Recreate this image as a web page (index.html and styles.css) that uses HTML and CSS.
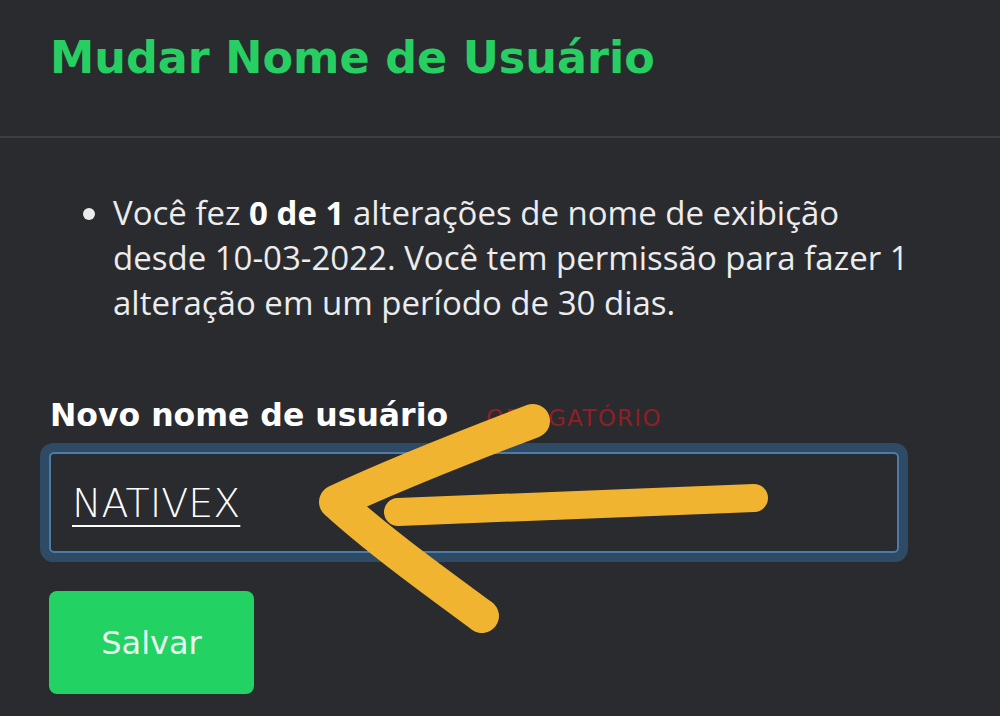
FILE: index.html
```html
<!DOCTYPE html>
<html lang="pt">

<head>
    <meta charset="UTF-8">
    <meta name="viewport" content="width=device-width, initial-scale=1.0">
    <title>Mudar Nome de Usuário</title>
    <link rel="stylesheet" href="styles.css">
</head>

<body>
    <!-- Header Section -->
    <header class="page-head">
        <h1>Mudar Nome de Usuário</h1>
    </header>

    <main class="content">
        <ul class="notes">
            <li>Você fez <strong>0 de 1</strong> alterações de nome de exibição desde <span class="date">10-03-2022.</span> Você tem permissão para fazer 1 alteração em um período de 30 dias.</li>
        </ul>

        <form class="name-form">
            <label class="field-label" for="newName">Novo nome de usuário <span class="required">OBRIGATÓRIO</span></label>
            <div class="field" id="newName"><span class="field-value">NATIVEX</span></div>
            <button type="submit" class="save-button">Salvar</button>
        </form>

        <!-- hand drawn arrow on top of the screenshot -->
        <svg class="arrow" width="1000" height="716" viewBox="0 0 1000 716">
            <g fill="none" stroke="#f1b431" stroke-linecap="round" stroke-linejoin="round">
                <path d="M533 421 C470 445 400 472 336 502 C380 542 440 585 482 616" stroke-width="34" />
                <path d="M398 512 C520 508 640 503 754 498" stroke-width="28" />
            </g>
        </svg>
    </main>
</body>

</html>
```

FILE: styles.css
```css
body {
    font-family: "Open Sans", Arial, sans-serif;
    background-color: #2a2b2f;
    margin: 0;
    padding: 0;
    color: #e9e9ea;
    width: 1000px;
    height: 716px;
    overflow: hidden;
    position: relative;
}

/* Header */
.page-head {
    height: 138px;
    border-bottom: 2px solid #3d3e42;
    box-sizing: border-box;
    padding: 28px 50px 0;
}

.page-head h1 {
    margin: 0;
    font-family: "DejaVu Sans", Verdana, sans-serif;
    font-size: 44.5px;
    line-height: 60px;
    font-weight: 700;
    color: #27cf63;
}

.content {
    padding: 52px 50px 0 49px;
}

/* Bullet text */
.notes {
    margin: 0;
    padding-left: 64px;
    width: 820px;
    box-sizing: content-box;
    font-size: 33px;
    line-height: 45px;
    color: #ececec;
}

.notes strong {
    font-weight: 700;
    color: #ffffff;
}

.date {
    white-space: nowrap;
}

/* Form */
.name-form {
    margin-top: 70px;
}

.field-label {
    display: flex;
    align-items: baseline;
    gap: 38px;
    padding-left: 1px;
    font-family: "DejaVu Sans", Verdana, sans-serif;
    font-size: 31.5px;
    line-height: 40px;
    font-weight: 700;
    color: #ffffff;
}

.required {
    font-size: 23px;
    font-weight: 400;
    letter-spacing: 1.3px;
    color: #8e1f26;
}

.field {
    margin-top: 14px;
    width: 850px;
    height: 101px;
    box-sizing: border-box;
    border: 2px solid #4b7bab;
    border-radius: 5px;
    box-shadow: 0 0 0 9px #2f4a64;
    background-color: #2a2b2f;
    display: flex;
    align-items: center;
    padding-left: 21px;
}

.field-value {
    font-family: "DejaVu Sans", Verdana, sans-serif;
    font-weight: 200;
    font-size: 39.5px;
    color: #ffffff;
    text-decoration: underline;
    text-underline-offset: 8px;
    text-decoration-thickness: 2px;
}

.save-button {
    margin-top: 38px;
    width: 205px;
    height: 103px;
    background-color: #22d263;
    color: #e9f8ee;
    border: none;
    border-radius: 8px;
    font-family: "DejaVu Sans", Verdana, sans-serif;
    font-size: 32px;
    cursor: pointer;
}

/* Arrow overlay */
.arrow {
    position: absolute;
    top: 0;
    left: 0;
    pointer-events: none;
}
```
